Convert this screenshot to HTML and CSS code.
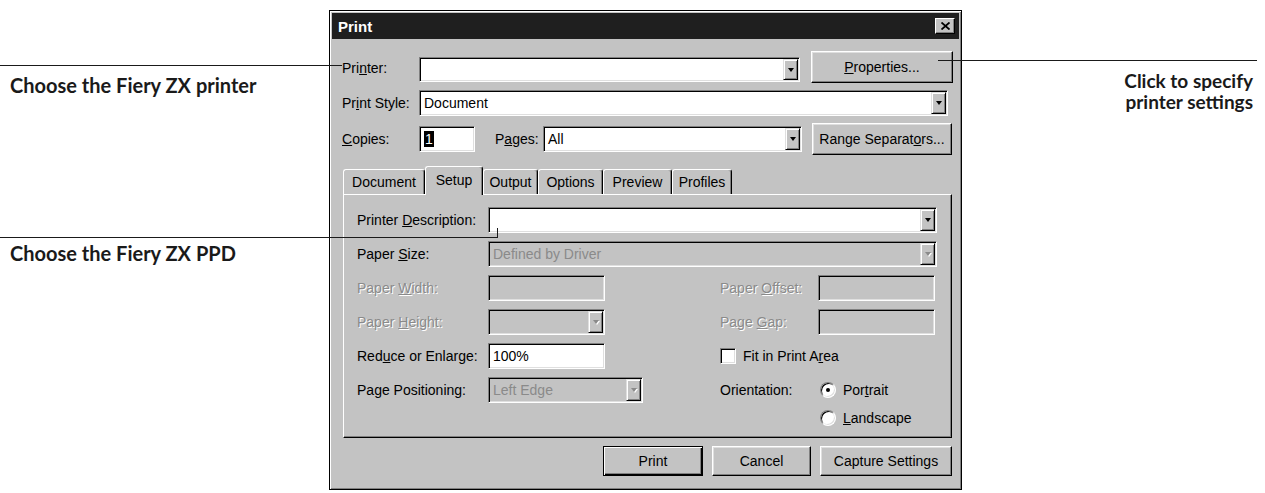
FILE: index.html
```html
<!DOCTYPE html>
<html lang="en">
<head>
<meta charset="utf-8">
<title>Print dialog</title>
<link rel="stylesheet" href="styles.css">
</head>
<body>
<div class="page">
  <div class="notes-left">
    <p class="note note-printer">Choose the Fiery ZX printer</p>
    <p class="note note-ppd">Choose the Fiery ZX PPD</p>
  </div>

  <div class="dialog">
    <div class="titlebar">
      <span class="title">Print</span>
      <span class="close"><svg width="9" height="8" viewBox="0 0 9 8"><path d="M0.5 0.5 L8.5 7.5 M8.5 0.5 L0.5 7.5" stroke="#000" stroke-width="1.8" fill="none"/></svg></span>
    </div>

    <div class="dlg-body">
      <div class="row row-printer">
        <span class="lbl">Pri<u>n</u>ter:</span>
        <div class="field combo w-printer"><span class="val"></span><span class="arrow"></span></div>
        <button class="btn btn-props"><u>P</u>roperties...</button>
      </div>

      <div class="row row-style">
        <span class="lbl">Pr<u>i</u>nt Style:</span>
        <div class="field combo w-style"><span class="val">Document</span><span class="arrow"></span></div>
      </div>

      <div class="row row-copies">
        <span class="lbl"><u>C</u>opies:</span>
        <div class="field w-copies"><span class="sel">1</span></div>
        <span class="lbl lbl-pages">P<u>a</u>ges:</span>
        <div class="field combo w-pages"><span class="val">All</span><span class="arrow"></span></div>
        <button class="btn btn-range">Range Separat<u>o</u>rs...</button>
      </div>

      <div class="tabs">
        <span class="tab t-doc">Document</span>
        <span class="tab t-setup active">Setup</span>
        <span class="tab t-out">Output</span>
        <span class="tab t-opt">Options</span>
        <span class="tab t-prev">Preview</span>
        <span class="tab t-prof">Profiles</span>
      </div>

      <div class="panel">
        <span class="plbl">Printer <u>D</u>escription:</span>
        <div class="field combo span3"><span class="val"></span><span class="arrow"></span></div>

        <span class="plbl">Paper <u>S</u>ize:</span>
        <div class="field combo dis span3"><span class="val">Defined by Driver</span><span class="arrow"></span></div>

        <span class="plbl dis-lbl">Paper <u>W</u>idth:</span>
        <div class="field dis w-small"></div>
        <span class="plbl dis-lbl">Paper <u>O</u>ffset:</span>
        <div class="field dis w-small"></div>

        <span class="plbl dis-lbl">Paper <u>H</u>eight:</span>
        <div class="field combo dis w-small"><span class="val"></span><span class="arrow"></span></div>
        <span class="plbl dis-lbl">Page <u>G</u>ap:</span>
        <div class="field dis w-small"></div>

        <span class="plbl">Red<u>u</u>ce or Enlarge:</span>
        <div class="field w-small"><span class="val">100%</span></div>
        <label class="opt span2"><span class="check"></span><span class="opt-text">Fit in Print A<u>r</u>ea</span></label>

        <span class="plbl">Pa<u>g</u>e Positioning:</span>
        <div class="field combo dis w-pos"><span class="val">Left Edge</span><span class="arrow"></span></div>
        <span class="plbl">Orientation:</span>
        <div class="radios">
          <label class="opt"><span class="radio on"></span><span class="opt-text">Por<u>t</u>rait</span></label>
          <label class="opt"><span class="radio"></span><span class="opt-text"><u>L</u>andscape</span></label>
        </div>
      </div>

      <div class="actions">
        <button class="btn default w-print">Print</button>
        <button class="btn w-cancel">Cancel</button>
        <button class="btn w-capture">Capture Settings</button>
      </div>
    </div>
  </div>

  <div class="notes-right">
    <p class="note note-right"><span class="note-line">Click to specify</span><span class="note-line">printer settings</span></p>
  </div>

  <span class="callout c-printer"></span>
  <span class="callout c-props"></span>
  <span class="callout c-ppd"></span>
  <span class="callout c-ppd-tick"></span>
</div>
</body>
</html>
```

FILE: styles.css
```css
* { box-sizing: border-box; }

html, body {
  margin: 0;
  padding: 0;
  background: #fff;
}

body {
  width: 1265px;
  height: 493px;
  overflow: hidden;
  font-family: "Liberation Sans", Arial, sans-serif;
}

.page {
  position: relative;
  display: flex;
  width: 1265px;
  height: 493px;
}

/* ---------- annotations ---------- */
.notes-left {
  width: 329px;
  flex: none;
  padding-left: 10px;
}

.note {
  margin: 0;
  font-family: Lato, "Open Sans", sans-serif;
  font-weight: 700;
  font-size: 20px;
  line-height: 20px;
  color: #1a1a1a;
  white-space: nowrap;
}

.note-printer { margin-top: 75px; }
.note-ppd { margin-top: 148px; }

.notes-right {
  flex: 1;
  display: flex;
  justify-content: flex-end;
  padding-right: 12px;
}

.note-right {
  margin-top: 71px;
  text-align: right;
  font-size: 19px;
  display: flex;
  flex-direction: column;
  align-items: flex-end;
}

.note-line {
  display: block;
  height: 20px;
  line-height: 20px;
}

.note-line + .note-line { margin-top: 1px; }

.callout {
  position: absolute;
  height: 1px;
  background: #1a1a1a;
}

.c-printer { left: 0; top: 65px; width: 342px; }
.c-props { left: 938px; top: 60px; width: 319px; }
.c-ppd { left: 0; top: 237px; width: 498px; }
.c-ppd-tick { left: 497px; top: 228px; width: 1px; height: 9px; }

/* ---------- dialog ---------- */
.dialog {
  width: 633px;
  height: 480px;
  margin-top: 10px;
  flex: none;
  background: #c3c3c3;
  border: 1px solid #000;
  box-shadow: inset 1px 1px 0 #fff, inset -1px -1px 0 #808080;
  padding: 2px 2px 0 2px;
  display: flex;
  flex-direction: column;
  font-size: 14px;
  color: #000;
}

.titlebar {
  height: 26px;
  flex: none;
  background: #1f1f1f;
  display: flex;
  align-items: center;
  justify-content: space-between;
  padding: 0 4px 0 6px;
}

.title {
  color: #fff;
  font-weight: 700;
  font-size: 15px;
}

.close {
  width: 20px;
  height: 16px;
  background: #c3c3c3;
  border: 1px solid;
  border-color: #fff #000 #000 #fff;
  box-shadow: inset -1px -1px 0 #808080;
  display: flex;
  align-items: center;
  justify-content: center;
}

.close svg { display: block; }

.dlg-body {
  padding: 0 6px 0 10px;
}

.row {
  display: flex;
  align-items: center;
}

.lbl {
  width: 77px;
  flex: none;
  white-space: nowrap;
}

.row-printer {
  margin-top: 12px;
  height: 32px;
  align-items: flex-end;
}

.row-printer > .lbl,
.row-printer > .field {
  margin-bottom: 1px;
  height: 25px;
  line-height: 23px;
}

.row-style {
  margin-top: 7px;
  height: 25px;
}

.row-copies {
  margin-top: 8px;
  height: 32px;
}

.lbl-pages {
  width: 48px;
  margin-left: 20px;
}

.w-printer { width: 381px; margin-right: 11px; }
.w-style { width: 529px; height: 25px; }
.w-copies { width: 56px; height: 27px; padding-left: 3px; }
.w-pages { width: 259px; height: 27px; margin-right: 10px; }

/* ---------- fields ---------- */
.field {
  background: #fff;
  border: 1px solid;
  border-color: #808080 #fff #fff #808080;
  box-shadow: inset 1px 1px 0 #000, inset -1px -1px 0 #dfdfdf;
  display: flex;
  align-items: center;
  padding: 1px 1px 1px 4px;
  height: 26px;
  white-space: nowrap;
  overflow: hidden;
  flex: none;
}

.field.dis {
  background: #c3c3c3;
  color: #8a8a8a;
}

.val { flex: 1; }

.sel {
  background: #000;
  color: #fff;
  line-height: 16px;
  padding: 0 1px;
}

.arrow {
  width: 15px;
  height: 100%;
  flex: none;
  background: #c3c3c3;
  border: 1px solid;
  border-color: #dfdfdf #000 #000 #dfdfdf;
  box-shadow: inset 1px 1px 0 #fff, inset -1px -1px 0 #808080;
  display: flex;
  align-items: center;
  justify-content: center;
}

.arrow::after {
  content: "";
  border-left: 3.5px solid transparent;
  border-right: 3.5px solid transparent;
  border-top: 4px solid #000;
}

.dis .arrow::after {
  border-top-color: #8a8a8a;
  filter: drop-shadow(1px 1px 0 #fff);
}

/* ---------- buttons ---------- */
.btn {
  height: 32px;
  flex: none;
  background: #c3c3c3;
  border: 1px solid;
  border-color: #fff #000 #000 #fff;
  box-shadow: inset -1px -1px 0 #808080, inset 1px 1px 0 #dfdfdf;
  font-family: inherit;
  font-size: 14px;
  color: #000;
  padding: 0;
  text-align: center;
}

.btn-props { width: 142px; }
.btn-range { width: 140px; }

.btn.default {
  border-color: #000;
  box-shadow: inset 1px 1px 0 #fff, inset -1px -1px 0 #000, inset -2px -2px 0 #808080;
}

/* ---------- tabs ---------- */
.tabs {
  margin-top: 12px;
  margin-left: 1px;
  height: 27px;
  display: flex;
  align-items: flex-end;
  position: relative;
  z-index: 1;
}

.tab {
  height: 25px;
  line-height: 25px;
  text-align: center;
  border-top: 1px solid #fff;
  border-left: 1px solid #fff;
  border-right: 1px solid #000;
  box-shadow: inset -1px 0 0 #808080;
  border-radius: 3px 3px 0 0;
  background: #c3c3c3;
  white-space: nowrap;
  flex: none;
}

.tab.active {
  height: 29px;
  line-height: 26px;
  margin-bottom: -1px;
}

.t-doc { width: 82px; }
.t-setup { width: 58px; }
.t-out { width: 55px; }
.t-opt { width: 65px; }
.t-prev { width: 69px; }
.t-prof { width: 60px; }

/* ---------- panel ---------- */
.panel {
  width: 609px;
  height: 244px;
  margin-left: 1px;
  border: 1px solid;
  border-color: #fff #000 #000 #fff;
  box-shadow: inset -1px -1px 0 #808080;
  padding: 12px 0 0 13px;
  display: grid;
  grid-template-columns: 131px 232px 98px 119px;
  grid-auto-rows: 26px;
  row-gap: 8px;
  align-items: center;
}

.plbl { white-space: nowrap; }

.dis-lbl {
  color: #8a8a8a;
  text-shadow: 1px 1px 0 #fff;
}

.span3 { grid-column: 2 / span 3; width: 449px; }
.span2 { grid-column: 3 / span 2; }

.w-small { width: 117px; }
.w-pos { width: 155px; }

.radios {
  grid-row: span 2;
  align-self: start;
  display: flex;
  flex-direction: column;
  gap: 2px;
  padding-left: 2px;
}

.opt {
  display: flex;
  align-items: center;
  gap: 7px;
  height: 26px;
  white-space: nowrap;
}

.check {
  width: 16px;
  height: 16px;
  flex: none;
  background: #fff;
  border: 1px solid;
  border-color: #808080 #fff #fff #808080;
  box-shadow: inset 1px 1px 0 #000, inset -1px -1px 0 #dfdfdf;
}

.radio {
  width: 16px;
  height: 16px;
  flex: none;
  border-radius: 50%;
  background: #fff;
  border: 1px solid;
  border-color: #808080 #fff #fff #808080;
  box-shadow: inset 1px 1px 0 #000, inset -1px -1px 0 #dfdfdf;
  display: flex;
  align-items: center;
  justify-content: center;
}

.radio.on::after {
  content: "";
  width: 4px;
  height: 4px;
  border-radius: 50%;
  background: #000;
}

/* ---------- bottom buttons ---------- */
.actions {
  margin-top: 8px;
  display: flex;
  justify-content: flex-end;
  gap: 9px;
  padding-right: 1px;
}

.actions .btn { height: 30px; }

.w-print { width: 100px; }
.w-cancel { width: 99px; }
.w-capture { width: 132px; }
```
